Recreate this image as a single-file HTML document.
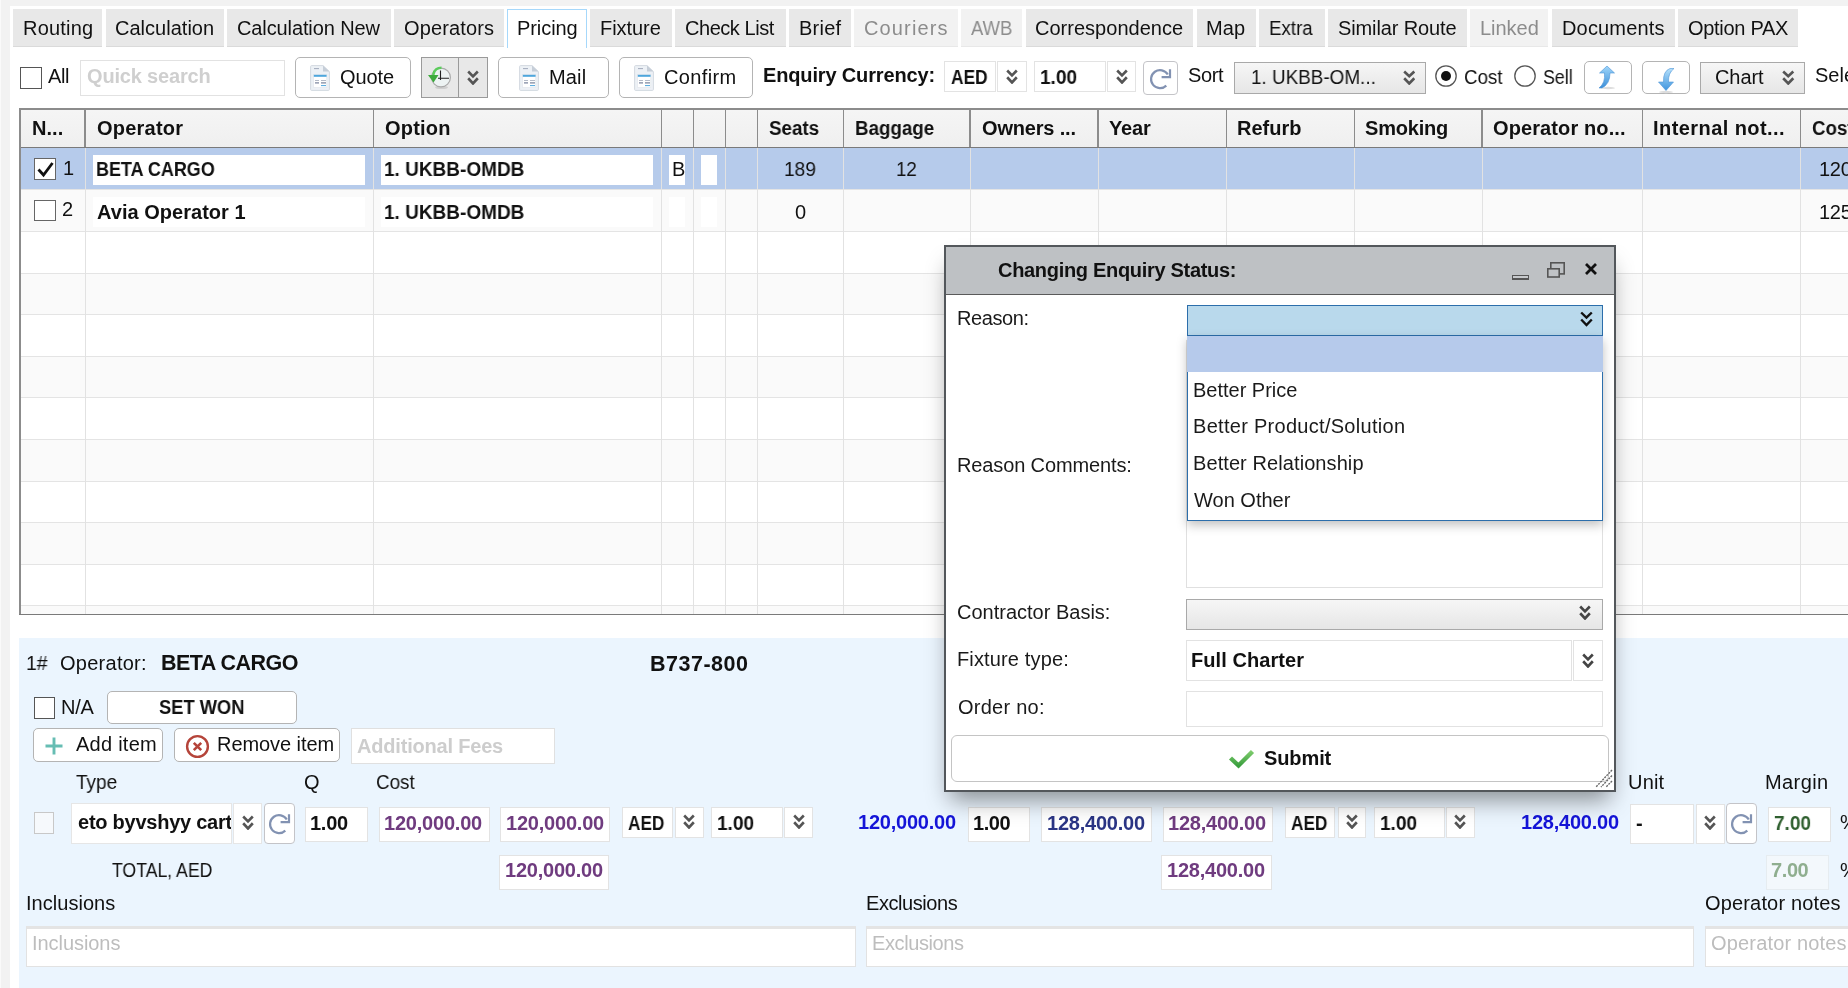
<!DOCTYPE html><html><head><meta charset="utf-8"><style>
*{box-sizing:border-box}
html,body{margin:0;padding:0}
body{width:1848px;height:988px;overflow:hidden;position:relative;background:#fff;font-family:"Liberation Sans",sans-serif;color:#111}
body div, body svg{position:absolute}
.t{white-space:nowrap;will-change:transform}
</style></head><body><div style="left:0.00px;top:0.00px;width:1848.00px;height:988.00px;background:#fff"></div>
<div style="left:1.00px;top:0.00px;width:8.50px;height:988.00px;background:#f2f2f2"></div>
<div style="left:9.50px;top:0.00px;width:1838.50px;height:6.00px;background:#f2f2f2"></div>
<div style="left:0.00px;top:0.00px;width:1.20px;height:988.00px;background:#fafafa"></div>
<div style="left:13.00px;top:9.00px;width:89.00px;height:38.00px;background:#e8e8e8;border-bottom:1px solid #dadada"></div>
<div class="t" style="left:23.00px;top:18.00px;font-size:20px;line-height:20px;letter-spacing:0.198px;">Routing</div>
<div style="left:106.00px;top:9.00px;width:118.00px;height:38.00px;background:#e8e8e8;border-bottom:1px solid #dadada"></div>
<div class="t" style="left:115.00px;top:18.00px;font-size:20px;line-height:20px;letter-spacing:0.018px;">Calculation</div>
<div style="left:227.00px;top:9.00px;width:163.50px;height:38.00px;background:#e8e8e8;border-bottom:1px solid #dadada"></div>
<div class="t" style="left:236.50px;top:18.00px;font-size:20px;line-height:20px;letter-spacing:-0.112px;">Calculation New</div>
<div style="left:394.00px;top:9.00px;width:110.00px;height:38.00px;background:#e8e8e8;border-bottom:1px solid #dadada"></div>
<div class="t" style="left:403.50px;top:18.00px;font-size:20px;line-height:20px;letter-spacing:0.134px;">Operators</div>
<div style="left:507.00px;top:9.00px;width:80.00px;height:39.00px;background:#fff;border:1px solid #a6d8fb;border-bottom:none"></div>
<div class="t" style="left:517.00px;top:18.00px;font-size:20px;line-height:20px;letter-spacing:-0.068px;">Pricing</div>
<div style="left:590.00px;top:9.00px;width:82.00px;height:38.00px;background:#e8e8e8;border-bottom:1px solid #dadada"></div>
<div class="t" style="left:600.00px;top:18.00px;font-size:20px;line-height:20px;letter-spacing:-0.050px;">Fixture</div>
<div style="left:675.00px;top:9.00px;width:111.00px;height:38.00px;background:#e8e8e8;border-bottom:1px solid #dadada"></div>
<div class="t" style="left:685.00px;top:18.00px;font-size:20px;line-height:20px;letter-spacing:-0.457px;">Check List</div>
<div style="left:789.00px;top:9.00px;width:62.00px;height:38.00px;background:#e8e8e8;border-bottom:1px solid #dadada"></div>
<div class="t" style="left:798.50px;top:18.00px;font-size:20px;line-height:20px;letter-spacing:0.233px;">Brief</div>
<div style="left:854.00px;top:9.00px;width:104.00px;height:38.00px;background:#f2f2f2;border-bottom:1px solid #e8e8e8"></div>
<div class="t" style="left:864.00px;top:18.00px;font-size:20px;line-height:20px;color:#8c8c8c;letter-spacing:1.132px;">Couriers</div>
<div style="left:961.00px;top:9.00px;width:61.00px;height:38.00px;background:#f2f2f2;border-bottom:1px solid #e8e8e8"></div>
<div class="t" style="left:971.00px;top:18.00px;font-size:20px;line-height:20px;color:#8c8c8c;transform:scaleX(0.9219);transform-origin:0 0;">AWB</div>
<div style="left:1026.00px;top:9.00px;width:167.00px;height:38.00px;background:#e8e8e8;border-bottom:1px solid #dadada"></div>
<div class="t" style="left:1035.00px;top:18.00px;font-size:20px;line-height:20px;letter-spacing:0.019px;">Correspondence</div>
<div style="left:1197.00px;top:9.00px;width:59.00px;height:38.00px;background:#e8e8e8;border-bottom:1px solid #dadada"></div>
<div class="t" style="left:1206.00px;top:18.00px;font-size:20px;line-height:20px;letter-spacing:0.108px;">Map</div>
<div style="left:1259.00px;top:9.00px;width:66.00px;height:38.00px;background:#e8e8e8;border-bottom:1px solid #dadada"></div>
<div class="t" style="left:1269.06px;top:18.00px;font-size:20px;line-height:20px;transform:scaleX(0.9365);transform-origin:0 0;">Extra</div>
<div style="left:1328.00px;top:9.00px;width:139.00px;height:38.00px;background:#e8e8e8;border-bottom:1px solid #dadada"></div>
<div class="t" style="left:1338.00px;top:18.00px;font-size:20px;line-height:20px;letter-spacing:-0.118px;">Similar Route</div>
<div style="left:1470.00px;top:9.00px;width:78.00px;height:38.00px;background:#f2f2f2;border-bottom:1px solid #e8e8e8"></div>
<div class="t" style="left:1480.00px;top:18.00px;font-size:20px;line-height:20px;color:#8c8c8c;letter-spacing:-0.022px;">Linked</div>
<div style="left:1552.00px;top:9.00px;width:123.00px;height:38.00px;background:#e8e8e8;border-bottom:1px solid #dadada"></div>
<div class="t" style="left:1561.50px;top:18.00px;font-size:20px;line-height:20px;letter-spacing:0.168px;">Documents</div>
<div style="left:1678.00px;top:9.00px;width:120.00px;height:38.00px;background:#e8e8e8;border-bottom:1px solid #dadada"></div>
<div class="t" style="left:1688.00px;top:18.00px;font-size:20px;line-height:20px;letter-spacing:-0.298px;">Option PAX</div>
<div style="left:20.00px;top:67.00px;width:21.50px;height:22.00px;border:1px solid #555;background:#fff"></div>
<div class="t" style="left:48.00px;top:66.00px;font-size:20px;line-height:20px;letter-spacing:-0.392px;">All</div>
<div style="left:80.00px;top:60.00px;width:205.00px;height:36.00px;border:1px solid #e2e2e2;background:#fff"></div>
<div class="t" style="left:87.00px;top:66.00px;font-size:20px;line-height:20px;font-weight:700;color:#cfcfcf;letter-spacing:-0.173px;">Quick search</div>
<div style="left:295.00px;top:57.00px;width:116.00px;height:41.00px;border:1.5px solid #b4b4b4;border-radius:5px;background:#fff"></div>
<svg style="left:310.2px;top:65px" width="20" height="26" viewBox="0 0 20 26"><path d="M0.6 1.6 Q0.6 0.6 1.6 0.6 L13 0.6 L19.4 6.6 L19.4 24.5 Q19.4 25.4 18.4 25.4 L1.6 25.4 Q0.6 25.4 0.6 24.5 Z" fill="#edf1f6" stroke="#d3d9e0" stroke-width="1"/><path d="M13 0.6 L13 6.6 L19.4 6.6 Z" fill="#c6ced8"/><rect x="4" y="3.2" width="5" height="0.9" fill="#98a1b3"/><rect x="3.4" y="9.4" width="13.4" height="13.2" fill="#fff" stroke="#dfe3e9" stroke-width="0.6"/><rect x="3.8" y="9.8" width="12.8" height="2" fill="#4ea6dc"/><rect x="5" y="15.2" width="4" height="0.8" fill="#a3aabb"/><rect x="11" y="15.2" width="5" height="0.8" fill="#a3aabb"/><rect x="5" y="17" width="4" height="1.7" fill="#9fa6b8"/><rect x="11" y="17" width="5" height="1.7" fill="#9fa6b8"/><rect x="11" y="20.1" width="5" height="1" fill="#4ea6dc"/></svg>
<div class="t" style="left:340.00px;top:67.40px;font-size:20px;line-height:20px;letter-spacing:-0.090px;">Quote</div>
<div style="left:498.00px;top:57.00px;width:111.00px;height:41.00px;border:1.5px solid #b4b4b4;border-radius:5px;background:#fff"></div>
<svg style="left:519.2px;top:65px" width="20" height="26" viewBox="0 0 20 26"><path d="M0.6 1.6 Q0.6 0.6 1.6 0.6 L13 0.6 L19.4 6.6 L19.4 24.5 Q19.4 25.4 18.4 25.4 L1.6 25.4 Q0.6 25.4 0.6 24.5 Z" fill="#edf1f6" stroke="#d3d9e0" stroke-width="1"/><path d="M13 0.6 L13 6.6 L19.4 6.6 Z" fill="#c6ced8"/><rect x="4" y="3.2" width="5" height="0.9" fill="#98a1b3"/><rect x="3.4" y="9.4" width="13.4" height="13.2" fill="#fff" stroke="#dfe3e9" stroke-width="0.6"/><rect x="3.8" y="9.8" width="12.8" height="2" fill="#4ea6dc"/><rect x="5" y="15.2" width="4" height="0.8" fill="#a3aabb"/><rect x="11" y="15.2" width="5" height="0.8" fill="#a3aabb"/><rect x="5" y="17" width="4" height="1.7" fill="#9fa6b8"/><rect x="11" y="17" width="5" height="1.7" fill="#9fa6b8"/><rect x="11" y="20.1" width="5" height="1" fill="#4ea6dc"/></svg>
<div class="t" style="left:549.00px;top:67.40px;font-size:20px;line-height:20px;letter-spacing:0.158px;">Mail</div>
<div style="left:619.00px;top:57.00px;width:134.00px;height:41.00px;border:1.5px solid #b4b4b4;border-radius:5px;background:#fff"></div>
<svg style="left:634.2px;top:65px" width="20" height="26" viewBox="0 0 20 26"><path d="M0.6 1.6 Q0.6 0.6 1.6 0.6 L13 0.6 L19.4 6.6 L19.4 24.5 Q19.4 25.4 18.4 25.4 L1.6 25.4 Q0.6 25.4 0.6 24.5 Z" fill="#edf1f6" stroke="#d3d9e0" stroke-width="1"/><path d="M13 0.6 L13 6.6 L19.4 6.6 Z" fill="#c6ced8"/><rect x="4" y="3.2" width="5" height="0.9" fill="#98a1b3"/><rect x="3.4" y="9.4" width="13.4" height="13.2" fill="#fff" stroke="#dfe3e9" stroke-width="0.6"/><rect x="3.8" y="9.8" width="12.8" height="2" fill="#4ea6dc"/><rect x="5" y="15.2" width="4" height="0.8" fill="#a3aabb"/><rect x="11" y="15.2" width="5" height="0.8" fill="#a3aabb"/><rect x="5" y="17" width="4" height="1.7" fill="#9fa6b8"/><rect x="11" y="17" width="5" height="1.7" fill="#9fa6b8"/><rect x="11" y="20.1" width="5" height="1" fill="#4ea6dc"/></svg>
<div class="t" style="left:663.80px;top:67.40px;font-size:20px;line-height:20px;letter-spacing:0.375px;">Confirm</div>
<div style="left:421.00px;top:57.00px;width:67.00px;height:41.00px;border:1.5px solid #9a9a9a;background:#e8e8e8"></div>
<div style="left:457.70px;top:57.00px;width:1.50px;height:41.00px;background:#9a9a9a"></div>
<svg style="left:424px;top:63px" width="30" height="28" viewBox="0 0 30 28"><ellipse cx="17.5" cy="24.5" rx="6.5" ry="1.6" fill="#cfcfcf"/><circle cx="17" cy="14.5" r="9.4" fill="#edf3f3" stroke="#a9a9a9" stroke-width="1.2"/><path d="M16.5 7.5 L16.5 17 M14 15.2 L25 15.2" stroke="#222" stroke-width="1.1"/><path d="M17.5 4.8 Q11 4.8 9.5 11 L9.5 14" fill="none" stroke="#5ccc5c" stroke-width="2.4"/><path d="M4 12 L9.5 19.5 L14.5 12 Z" fill="#3daa3d"/></svg>
<svg style="left:467px;top:70px" width="12" height="15" viewBox="0 0 12 15"><path d="M1.2 1.5 L6.0 6.3 L10.8 1.5 M1.2 8.25 L6.0 13.5 L10.8 8.25" fill="none" stroke="#555" stroke-width="2.6"/></svg>
<div class="t" style="left:763.00px;top:64.50px;font-size:20px;line-height:20px;font-weight:700;letter-spacing:-0.151px;">Enquiry Currency:</div>
<div style="left:944.00px;top:61.00px;width:52.00px;height:31.00px;border:1px solid #e3e3e3;background:#fff"></div>
<div style="left:997.00px;top:61.00px;width:30.00px;height:31.00px;border:1px solid #e3e3e3;background:#fff"></div>
<div class="t" style="left:951.30px;top:67.40px;font-size:20px;line-height:20px;font-weight:700;transform:scaleX(0.8664);transform-origin:0 0;">AED</div>
<svg style="left:1006px;top:69px" width="12" height="15" viewBox="0 0 12 15"><path d="M1.2 1.5 L6.0 6.3 L10.8 1.5 M1.2 8.25 L6.0 13.5 L10.8 8.25" fill="none" stroke="#555" stroke-width="2.6"/></svg>
<div style="left:1034.00px;top:61.00px;width:72.00px;height:31.00px;border:1px solid #e3e3e3;background:#fff"></div>
<div style="left:1107.00px;top:61.00px;width:29.00px;height:31.00px;border:1px solid #e3e3e3;background:#fff"></div>
<div class="t" style="left:1040.05px;top:67.40px;font-size:20px;line-height:20px;font-weight:700;transform:scaleX(0.9523);transform-origin:0 0;">1.00</div>
<svg style="left:1115.5px;top:69px" width="12.0" height="15" viewBox="0 0 12.0 15"><path d="M1.2 1.5 L6.0 6.3 L10.8 1.5 M1.2 8.25 L6.0 13.5 L10.8 8.25" fill="none" stroke="#555" stroke-width="2.6"/></svg>
<div style="left:1143.00px;top:61.00px;width:34.50px;height:34.00px;border:1.5px solid #c4c4c8;border-radius:4px;background:#fff;box-sizing:border-box"></div>
<svg style="left:1148.2px;top:66.0px" width="26" height="26" viewBox="0 0 26 26"><path d="M19.8 8.5 A9 9 0 1 0 18.3 19.6" fill="none" stroke="#8292b2" stroke-width="2.2"/><path d="M22 3.2 L22 11.2 L13.6 11.2" fill="none" stroke="#8292b2" stroke-width="2.2"/></svg>
<div class="t" style="left:1188.00px;top:65.00px;font-size:20px;line-height:20px;letter-spacing:-0.374px;">Sort</div>
<div style="left:1234.00px;top:62.00px;width:192.00px;height:32.00px;border:1px solid #a9a9a9;background:linear-gradient(#f6f6f6,#e6e6e6)"></div>
<div class="t" style="left:1250.66px;top:67.40px;font-size:20px;line-height:20px;transform:scaleX(0.9438);transform-origin:0 0;">1. UKBB-OM...</div>
<svg style="left:1402.5px;top:70px" width="12.5" height="15" viewBox="0 0 12.5 15"><path d="M1.2 1.5 L6.25 6.3 L11.3 1.5 M1.2 8.25 L6.25 13.5 L11.3 8.25" fill="none" stroke="#555" stroke-width="2.6"/></svg>
<svg style="left:1434px;top:64px" width="24" height="24" viewBox="0 0 24 24"><circle cx="12" cy="12" r="10.2" fill="#fff" stroke="#555" stroke-width="1.3"/><circle cx="12" cy="12" r="5" fill="#111"/></svg>
<div class="t" style="left:1464.06px;top:66.80px;font-size:20px;line-height:20px;transform:scaleX(0.9367);transform-origin:0 0;">Cost</div>
<svg style="left:1513px;top:64px" width="24" height="24" viewBox="0 0 24 24"><circle cx="12" cy="12" r="10.2" fill="#fff" stroke="#555" stroke-width="1.3"/></svg>
<div class="t" style="left:1543.00px;top:66.80px;font-size:20px;line-height:20px;transform:scaleX(0.8904);transform-origin:0 0;">Sell</div>
<div style="left:1584.00px;top:61.00px;width:48.00px;height:33.00px;border:1.5px solid #b4b4b4;border-radius:5px;background:#fff"></div>
<svg style="left:1596px;top:64px" width="22" height="28" viewBox="0 0 22 28"><defs><linearGradient id="ga" x1="0" y1="0" x2="0" y2="1"><stop offset="0" stop-color="#9fd6fa"/><stop offset="1" stop-color="#3d8fd8"/></linearGradient></defs><ellipse cx="12" cy="24" rx="7" ry="1.2" fill="#ddd"/><path d="M11 2 L18.5 9 L14 9 Q14 20 6 24 L3 24 Q9.5 19 8.5 9 L3.5 9 Z" fill="url(#ga)" stroke="#4b93d6" stroke-width="0.6"/></svg>
<div style="left:1642.00px;top:61.00px;width:48.00px;height:33.00px;border:1.5px solid #b4b4b4;border-radius:5px;background:#fff"></div>
<svg style="left:1655px;top:66.5px" width="22" height="28" viewBox="0 0 22 28"><defs><linearGradient id="gb" x1="0" y1="0" x2="0" y2="1"><stop offset="0" stop-color="#b5e0fb"/><stop offset="1" stop-color="#3f95de"/></linearGradient></defs><ellipse cx="11" cy="25" rx="7" ry="1.2" fill="#ddd"/><path d="M19 1.5 L15 1.5 Q8 4 8.5 15 L3.5 15 L11 23.5 L18.5 15 L13.5 15 Q13 6 19 1.5 Z" fill="url(#gb)" stroke="#4b93d6" stroke-width="0.6"/></svg>
<div style="left:1700.00px;top:62.00px;width:105.00px;height:32.00px;border:1px solid #a9a9a9;background:linear-gradient(#f6f6f6,#e6e6e6)"></div>
<div class="t" style="left:1715.00px;top:67.40px;font-size:20px;line-height:20px;letter-spacing:-0.087px;">Chart</div>
<svg style="left:1782px;top:70px" width="12.5" height="15" viewBox="0 0 12.5 15"><path d="M1.2 1.5 L6.25 6.3 L11.3 1.5 M1.2 8.25 L6.25 13.5 L11.3 8.25" fill="none" stroke="#555" stroke-width="2.6"/></svg>
<div class="t" style="left:1815.00px;top:65.00px;font-size:20px;line-height:20px;">Select</div>
<div style="left:19.50px;top:148.00px;width:1828.50px;height:42.00px;background:#b6cbeb;border-bottom:1px solid #e4e4e4"></div>
<div style="left:19.50px;top:190.00px;width:1828.50px;height:42.00px;background:#fafafa;border-bottom:1px solid #e4e4e4"></div>
<div style="left:19.50px;top:232.00px;width:1828.50px;height:41.60px;background:#ffffff;border-bottom:1px solid #e4e4e4"></div>
<div style="left:19.50px;top:273.60px;width:1828.50px;height:41.60px;background:#fafafa;border-bottom:1px solid #e4e4e4"></div>
<div style="left:19.50px;top:315.20px;width:1828.50px;height:41.60px;background:#ffffff;border-bottom:1px solid #e4e4e4"></div>
<div style="left:19.50px;top:356.80px;width:1828.50px;height:41.60px;background:#fafafa;border-bottom:1px solid #e4e4e4"></div>
<div style="left:19.50px;top:398.40px;width:1828.50px;height:41.60px;background:#ffffff;border-bottom:1px solid #e4e4e4"></div>
<div style="left:19.50px;top:440.00px;width:1828.50px;height:41.60px;background:#fafafa;border-bottom:1px solid #e4e4e4"></div>
<div style="left:19.50px;top:481.60px;width:1828.50px;height:41.60px;background:#ffffff;border-bottom:1px solid #e4e4e4"></div>
<div style="left:19.50px;top:523.20px;width:1828.50px;height:41.60px;background:#fafafa;border-bottom:1px solid #e4e4e4"></div>
<div style="left:19.50px;top:564.80px;width:1828.50px;height:41.60px;background:#ffffff;border-bottom:1px solid #e4e4e4"></div>
<div style="left:19.50px;top:606.40px;width:1828.50px;height:7.60px;background:#fafafa"></div>
<div style="left:84.50px;top:148.00px;width:1.00px;height:466.00px;background:#e2e2e2"></div>
<div style="left:373.00px;top:148.00px;width:1.00px;height:466.00px;background:#e2e2e2"></div>
<div style="left:661.00px;top:148.00px;width:1.00px;height:466.00px;background:#e2e2e2"></div>
<div style="left:693.00px;top:148.00px;width:1.00px;height:466.00px;background:#e2e2e2"></div>
<div style="left:725.00px;top:148.00px;width:1.00px;height:466.00px;background:#e2e2e2"></div>
<div style="left:757.00px;top:148.00px;width:1.00px;height:466.00px;background:#e2e2e2"></div>
<div style="left:843.00px;top:148.00px;width:1.00px;height:466.00px;background:#e2e2e2"></div>
<div style="left:969.50px;top:148.00px;width:1.00px;height:466.00px;background:#e2e2e2"></div>
<div style="left:1097.50px;top:148.00px;width:1.00px;height:466.00px;background:#e2e2e2"></div>
<div style="left:1226.00px;top:148.00px;width:1.00px;height:466.00px;background:#e2e2e2"></div>
<div style="left:1354.00px;top:148.00px;width:1.00px;height:466.00px;background:#e2e2e2"></div>
<div style="left:1481.50px;top:148.00px;width:1.00px;height:466.00px;background:#e2e2e2"></div>
<div style="left:1642.00px;top:148.00px;width:1.00px;height:466.00px;background:#e2e2e2"></div>
<div style="left:1800.00px;top:148.00px;width:1.00px;height:466.00px;background:#e2e2e2"></div>
<div style="left:19.50px;top:108.00px;width:1828.50px;height:40.00px;background:linear-gradient(#f5f5f5,#efefef);border-top:2px solid #8c8c8c"></div>
<div style="left:19.50px;top:146.60px;width:1828.50px;height:1.80px;background:#7a7a7a"></div>
<div style="left:84.20px;top:110.00px;width:1.60px;height:37.00px;background:#8c8c8c"></div>
<div style="left:372.70px;top:110.00px;width:1.60px;height:37.00px;background:#8c8c8c"></div>
<div style="left:660.70px;top:110.00px;width:1.60px;height:37.00px;background:#8c8c8c"></div>
<div style="left:692.70px;top:110.00px;width:1.60px;height:37.00px;background:#8c8c8c"></div>
<div style="left:724.70px;top:110.00px;width:1.60px;height:37.00px;background:#8c8c8c"></div>
<div style="left:756.70px;top:110.00px;width:1.60px;height:37.00px;background:#8c8c8c"></div>
<div style="left:842.70px;top:110.00px;width:1.60px;height:37.00px;background:#8c8c8c"></div>
<div style="left:969.20px;top:110.00px;width:1.60px;height:37.00px;background:#8c8c8c"></div>
<div style="left:1097.20px;top:110.00px;width:1.60px;height:37.00px;background:#8c8c8c"></div>
<div style="left:1225.70px;top:110.00px;width:1.60px;height:37.00px;background:#8c8c8c"></div>
<div style="left:1353.70px;top:110.00px;width:1.60px;height:37.00px;background:#8c8c8c"></div>
<div style="left:1481.20px;top:110.00px;width:1.60px;height:37.00px;background:#8c8c8c"></div>
<div style="left:1641.70px;top:110.00px;width:1.60px;height:37.00px;background:#8c8c8c"></div>
<div style="left:1799.70px;top:110.00px;width:1.60px;height:37.00px;background:#8c8c8c"></div>
<div style="left:18.50px;top:108.00px;width:2.00px;height:507.00px;background:#8c8c8c"></div>
<div style="left:18.50px;top:613.50px;width:1829.50px;height:1.50px;background:#7a7a7a"></div>
<div class="t" style="left:32.30px;top:118.00px;font-size:20px;line-height:20px;font-weight:700;letter-spacing:0.048px;">N...</div>
<div class="t" style="left:96.90px;top:118.00px;font-size:20px;line-height:20px;font-weight:700;letter-spacing:0.217px;">Operator</div>
<div class="t" style="left:385.00px;top:118.00px;font-size:20px;line-height:20px;font-weight:700;letter-spacing:0.219px;">Option</div>
<div class="t" style="left:769.00px;top:118.00px;font-size:20px;line-height:20px;font-weight:700;transform:scaleX(0.9390);transform-origin:0 0;">Seats</div>
<div class="t" style="left:855.06px;top:118.00px;font-size:20px;line-height:20px;font-weight:700;transform:scaleX(0.9383);transform-origin:0 0;">Baggage</div>
<div class="t" style="left:982.00px;top:118.00px;font-size:20px;line-height:20px;font-weight:700;letter-spacing:-0.181px;">Owners ...</div>
<div class="t" style="left:1109.00px;top:118.00px;font-size:20px;line-height:20px;font-weight:700;letter-spacing:-0.161px;">Year</div>
<div class="t" style="left:1236.70px;top:118.00px;font-size:20px;line-height:20px;font-weight:700;letter-spacing:0.015px;">Refurb</div>
<div class="t" style="left:1365.00px;top:118.00px;font-size:20px;line-height:20px;font-weight:700;letter-spacing:-0.206px;">Smoking</div>
<div class="t" style="left:1493.30px;top:118.00px;font-size:20px;line-height:20px;font-weight:700;letter-spacing:0.110px;">Operator no...</div>
<div class="t" style="left:1652.50px;top:118.00px;font-size:20px;line-height:20px;font-weight:700;letter-spacing:0.429px;">Internal not...</div>
<div class="t" style="left:1812.00px;top:118.00px;font-size:20px;line-height:20px;font-weight:700;transform:scaleX(0.9334);transform-origin:0 0;">Cost</div>
<div style="left:34.00px;top:158.00px;width:22.00px;height:21.50px;border:1px solid #666;background:#fff"></div>
<svg style="left:36px;top:161px" width="19" height="17" viewBox="0 0 19 17"><path d="M2.5 8.5 L7.5 14 L16.5 2" fill="none" stroke="#111" stroke-width="2.8"/></svg>
<div class="t" style="left:62.50px;top:158.00px;font-size:20px;line-height:20px;">1</div>
<div style="left:93.00px;top:155.00px;width:272.00px;height:30.00px;background:#fff"></div>
<div class="t" style="left:96.10px;top:159.30px;font-size:20px;line-height:20px;font-weight:700;transform:scaleX(0.8980);transform-origin:0 0;">BETA CARGO</div>
<div style="left:381.00px;top:155.00px;width:272.00px;height:30.00px;background:#fff"></div>
<div class="t" style="left:384.05px;top:159.30px;font-size:20px;line-height:20px;font-weight:700;transform:scaleX(0.9499);transform-origin:0 0;">1. UKBB-OMDB</div>
<div style="left:669.00px;top:155.00px;width:16.00px;height:30.00px;background:#fff"></div>
<div class="t" style="left:672.00px;top:159.30px;font-size:20px;line-height:20px;">B</div>
<div style="left:701.00px;top:155.00px;width:16.00px;height:30.00px;background:#fff"></div>
<div class="t" style="left:783.84px;top:159.30px;font-size:20px;line-height:20px;transform:scaleX(0.9583);transform-origin:0 0;">189</div>
<div class="t" style="left:895.86px;top:159.30px;font-size:20px;line-height:20px;transform:scaleX(0.9374);transform-origin:0 0;">12</div>
<div class="t" style="left:1819.40px;top:159.30px;font-size:20px;line-height:20px;letter-spacing:-0.264px;">120,000.00</div>
<div style="left:34.00px;top:200.00px;width:22.00px;height:21.00px;border:1px solid #666;background:#fff"></div>
<div class="t" style="left:61.50px;top:198.60px;font-size:20px;line-height:20px;">2</div>
<div style="left:93.00px;top:197.00px;width:272.00px;height:30.00px;background:#fff"></div>
<div style="left:381.00px;top:197.00px;width:272.00px;height:30.00px;background:#fff"></div>
<div style="left:669.00px;top:197.00px;width:16.00px;height:30.00px;background:#fff"></div>
<div style="left:701.00px;top:197.00px;width:16.00px;height:30.00px;background:#fff"></div>
<div class="t" style="left:96.50px;top:201.50px;font-size:20px;line-height:20px;font-weight:700;letter-spacing:0.030px;">Avia Operator 1</div>
<div class="t" style="left:384.05px;top:201.50px;font-size:20px;line-height:20px;font-weight:700;transform:scaleX(0.9499);transform-origin:0 0;">1. UKBB-OMDB</div>
<div class="t" style="left:795.00px;top:201.50px;font-size:20px;line-height:20px;">0</div>
<div class="t" style="left:1819.40px;top:201.50px;font-size:20px;line-height:20px;letter-spacing:-0.264px;">125,000.00</div>
<div style="left:19.00px;top:638.00px;width:1829.00px;height:350.00px;background:#ebf5fe"></div>
<div class="t" style="left:26.03px;top:653.20px;font-size:20px;line-height:20px;transform:scaleX(0.9718);transform-origin:0 0;">1#</div>
<div class="t" style="left:60.00px;top:653.20px;font-size:20px;line-height:20px;letter-spacing:0.259px;">Operator:</div>
<div class="t" style="left:160.50px;top:652.73px;font-size:21.5px;line-height:21.5px;font-weight:700;letter-spacing:-0.523px;">BETA CARGO</div>
<div class="t" style="left:650.00px;top:654.43px;font-size:21.5px;line-height:21.5px;font-weight:700;letter-spacing:0.504px;">B737-800</div>
<div style="left:33.50px;top:697.00px;width:21.00px;height:22.00px;border:1px solid #555;background:#fff"></div>
<div class="t" style="left:61.00px;top:697.00px;font-size:20px;line-height:20px;letter-spacing:-0.250px;">N/A</div>
<div style="left:106.50px;top:691.00px;width:190.50px;height:32.50px;border:1.5px solid #b4b4b4;border-radius:5px;background:#fff"></div>
<div class="t" style="left:159.00px;top:697.00px;font-size:20px;line-height:20px;font-weight:700;transform:scaleX(0.9151);transform-origin:0 0;">SET WON</div>
<div style="left:33.00px;top:728.00px;width:130.00px;height:34.00px;border:1.5px solid #b4b4b4;border-radius:5px;background:#fff"></div>
<svg style="left:44px;top:736px" width="20" height="20" viewBox="0 0 20 20"><path d="M10 1.5 L10 18.5 M1.5 10 L18.5 10" stroke="#66bdb3" stroke-width="2.9"/></svg>
<div class="t" style="left:76.00px;top:734.00px;font-size:20px;line-height:20px;letter-spacing:0.248px;">Add item</div>
<div style="left:173.70px;top:728.00px;width:166.30px;height:34.00px;border:1.5px solid #b4b4b4;border-radius:5px;background:#fff"></div>
<svg style="left:185px;top:734px" width="25" height="25" viewBox="0 0 25 25"><circle cx="12.5" cy="12.5" r="10.4" fill="none" stroke="#b5443a" stroke-width="2.4"/><path d="M8.8 8.8 L16.2 16.2 M16.2 8.8 L8.8 16.2" stroke="#b5443a" stroke-width="2.6"/></svg>
<div class="t" style="left:216.50px;top:734.00px;font-size:20px;line-height:20px;letter-spacing:-0.065px;">Remove item</div>
<div style="left:351.00px;top:728.00px;width:204.00px;height:35.50px;border:1px solid #e0e0e0;background:#fff"></div>
<div class="t" style="left:357.40px;top:735.50px;font-size:20px;line-height:20px;font-weight:700;color:#cdcdcd;letter-spacing:-0.192px;">Additional Fees</div>
<div class="t" style="left:76.10px;top:771.80px;font-size:20px;line-height:20px;transform:scaleX(0.9506);transform-origin:0 0;">Type</div>
<div class="t" style="left:303.50px;top:771.80px;font-size:20px;line-height:20px;">Q</div>
<div class="t" style="left:376.06px;top:771.80px;font-size:20px;line-height:20px;transform:scaleX(0.9417);transform-origin:0 0;">Cost</div>
<div class="t" style="left:1627.50px;top:771.80px;font-size:20px;line-height:20px;letter-spacing:0.197px;">Unit</div>
<div class="t" style="left:1765.00px;top:771.80px;font-size:20px;line-height:20px;letter-spacing:0.398px;">Margin</div>
<div style="left:33.50px;top:812.00px;width:20.50px;height:22.00px;border:1px solid #c8c8c8;background:#f6f9fc"></div>
<div style="left:71.00px;top:803.00px;width:160.50px;height:40.50px;border:1px solid #e6e6e6;background:#fff"></div>
<div style="left:72px;top:804px;width:159px;height:39px;overflow:hidden"><div class="t" style="left:5.50px;top:8.20px;font-size:20px;line-height:20px;font-weight:700;letter-spacing:-0.246px;">eto byvshyy cartoe</div></div>
<div style="left:233.00px;top:803.00px;width:28.50px;height:40.50px;border:1px solid #e6e6e6;background:#fff"></div>
<svg style="left:241.5px;top:815px" width="12.0" height="15" viewBox="0 0 12.0 15"><path d="M1.2 1.5 L6.0 6.3 L10.8 1.5 M1.2 8.25 L6.0 13.5 L10.8 8.25" fill="none" stroke="#555" stroke-width="2.6"/></svg>
<div style="left:263.50px;top:803.00px;width:31.00px;height:40.50px;border:1.5px solid #c4c4c8;border-radius:4px;background:#fff;box-sizing:border-box"></div>
<svg style="left:267.0px;top:811.2px" width="26" height="26" viewBox="0 0 26 26"><path d="M19.8 8.5 A9 9 0 1 0 18.3 19.6" fill="none" stroke="#8292b2" stroke-width="2.2"/><path d="M22 3.2 L22 11.2 L13.6 11.2" fill="none" stroke="#8292b2" stroke-width="2.2"/></svg>
<div style="left:304.50px;top:806.50px;width:63.00px;height:35.50px;border:1px solid #e3e3e3;background:#fff"></div>
<div class="t" style="left:310.40px;top:812.50px;font-size:20px;line-height:20px;font-weight:700;letter-spacing:-0.268px;">1.00</div>
<div style="left:378.50px;top:806.50px;width:111.00px;height:35.50px;border:1px solid #e3e3e3;background:#fff"></div>
<div class="t" style="left:384.30px;top:812.50px;font-size:20px;line-height:20px;font-weight:700;color:#6f3b7f;letter-spacing:-0.208px;">120,000.00</div>
<div style="left:500.00px;top:806.50px;width:110.00px;height:35.50px;border:1px solid #e3e3e3;background:#fff"></div>
<div class="t" style="left:506.30px;top:812.50px;font-size:20px;line-height:20px;font-weight:700;color:#6f3b7f;letter-spacing:-0.208px;">120,000.00</div>
<div style="left:621.50px;top:806.50px;width:51.00px;height:31.00px;border:1px solid #e3e3e3;background:#fff"></div>
<div class="t" style="left:628.00px;top:812.50px;font-size:20px;line-height:20px;font-weight:700;transform:scaleX(0.8616);transform-origin:0 0;">AED</div>
<div style="left:674.50px;top:806.50px;width:29.00px;height:31.00px;border:1px solid #e3e3e3;background:#fff"></div>
<svg style="left:683px;top:814px" width="12" height="15" viewBox="0 0 12 15"><path d="M1.2 1.5 L6.0 6.3 L10.8 1.5 M1.2 8.25 L6.0 13.5 L10.8 8.25" fill="none" stroke="#555" stroke-width="2.6"/></svg>
<div style="left:711.00px;top:806.50px;width:72.00px;height:31.00px;border:1px solid #e3e3e3;background:#fff"></div>
<div class="t" style="left:717.05px;top:812.50px;font-size:20px;line-height:20px;font-weight:700;transform:scaleX(0.9523);transform-origin:0 0;">1.00</div>
<div style="left:784.00px;top:806.50px;width:28.50px;height:31.00px;border:1px solid #e3e3e3;background:#fff"></div>
<svg style="left:792.5px;top:814px" width="12.0" height="15" viewBox="0 0 12.0 15"><path d="M1.2 1.5 L6.0 6.3 L10.8 1.5 M1.2 8.25 L6.0 13.5 L10.8 8.25" fill="none" stroke="#555" stroke-width="2.6"/></svg>
<div class="t" style="left:858.00px;top:811.50px;font-size:20px;line-height:20px;font-weight:700;color:#1414d8;letter-spacing:-0.219px;">120,000.00</div>
<div style="left:967.50px;top:807.00px;width:62.50px;height:34.50px;border:1px solid #e3e3e3;background:#fff"></div>
<div class="t" style="left:973.00px;top:812.50px;font-size:20px;line-height:20px;font-weight:700;letter-spacing:-0.434px;">1.00</div>
<div style="left:1041.00px;top:807.00px;width:110.50px;height:34.50px;border:1px solid #e3e3e3;background:#fff"></div>
<div class="t" style="left:1047.00px;top:812.50px;font-size:20px;line-height:20px;font-weight:700;color:#2b3585;letter-spacing:-0.219px;">128,400.00</div>
<div style="left:1162.50px;top:807.00px;width:110.50px;height:34.50px;border:1px solid #e3e3e3;background:#fff"></div>
<div class="t" style="left:1168.00px;top:812.50px;font-size:20px;line-height:20px;font-weight:700;color:#6f3b7f;letter-spacing:-0.219px;">128,400.00</div>
<div style="left:1284.50px;top:806.50px;width:50.50px;height:31.00px;border:1px solid #e3e3e3;background:#fff"></div>
<div class="t" style="left:1291.00px;top:812.50px;font-size:20px;line-height:20px;font-weight:700;transform:scaleX(0.8616);transform-origin:0 0;">AED</div>
<div style="left:1337.50px;top:806.50px;width:28.00px;height:31.00px;border:1px solid #e3e3e3;background:#fff"></div>
<svg style="left:1345.5px;top:814px" width="12.0" height="15" viewBox="0 0 12.0 15"><path d="M1.2 1.5 L6.0 6.3 L10.8 1.5 M1.2 8.25 L6.0 13.5 L10.8 8.25" fill="none" stroke="#555" stroke-width="2.6"/></svg>
<div style="left:1373.50px;top:806.50px;width:71.50px;height:31.00px;border:1px solid #e3e3e3;background:#fff"></div>
<div class="t" style="left:1379.55px;top:812.50px;font-size:20px;line-height:20px;font-weight:700;transform:scaleX(0.9523);transform-origin:0 0;">1.00</div>
<div style="left:1446.00px;top:806.50px;width:28.50px;height:31.00px;border:1px solid #e3e3e3;background:#fff"></div>
<svg style="left:1454px;top:814px" width="12" height="15" viewBox="0 0 12 15"><path d="M1.2 1.5 L6.0 6.3 L10.8 1.5 M1.2 8.25 L6.0 13.5 L10.8 8.25" fill="none" stroke="#555" stroke-width="2.6"/></svg>
<div class="t" style="left:1521.00px;top:811.50px;font-size:20px;line-height:20px;font-weight:700;color:#1414d8;letter-spacing:-0.219px;">128,400.00</div>
<div style="left:1629.50px;top:803.50px;width:64.00px;height:40.00px;border:1px solid #e3e3e3;background:#fff"></div>
<div class="t" style="left:1636.40px;top:812.50px;font-size:20px;line-height:20px;font-weight:700;">-</div>
<div style="left:1695.50px;top:803.50px;width:29.00px;height:40.00px;border:1px solid #e3e3e3;background:#fff"></div>
<svg style="left:1704px;top:815px" width="12" height="15" viewBox="0 0 12 15"><path d="M1.2 1.5 L6.0 6.3 L10.8 1.5 M1.2 8.25 L6.0 13.5 L10.8 8.25" fill="none" stroke="#555" stroke-width="2.6"/></svg>
<div style="left:1725.50px;top:803.00px;width:31.50px;height:40.50px;border:1.5px solid #c4c4c8;border-radius:4px;background:#fff;box-sizing:border-box"></div>
<svg style="left:1729.2px;top:811.2px" width="26" height="26" viewBox="0 0 26 26"><path d="M19.8 8.5 A9 9 0 1 0 18.3 19.6" fill="none" stroke="#8292b2" stroke-width="2.2"/><path d="M22 3.2 L22 11.2 L13.6 11.2" fill="none" stroke="#8292b2" stroke-width="2.2"/></svg>
<div style="left:1767.50px;top:806.50px;width:63.00px;height:35.50px;border:1px solid #e3e3e3;background:#fff"></div>
<div class="t" style="left:1773.50px;top:812.50px;font-size:20px;line-height:20px;font-weight:700;color:#2f5f2f;transform:scaleX(0.9510);transform-origin:0 0;">7.00</div>
<div class="t" style="left:1840.00px;top:812.00px;font-size:20px;line-height:20px;">%</div>
<div class="t" style="left:112.00px;top:859.50px;font-size:20px;line-height:20px;transform:scaleX(0.8829);transform-origin:0 0;">TOTAL, AED</div>
<div style="left:498.50px;top:854.50px;width:110.50px;height:35.00px;border:1px solid #e3e3e3;background:#fff"></div>
<div class="t" style="left:504.50px;top:860.00px;font-size:20px;line-height:20px;font-weight:700;color:#6f3b7f;letter-spacing:-0.219px;">120,000.00</div>
<div style="left:1161.00px;top:854.50px;width:110.50px;height:35.00px;border:1px solid #e3e3e3;background:#fff"></div>
<div class="t" style="left:1166.50px;top:860.00px;font-size:20px;line-height:20px;font-weight:700;color:#6f3b7f;letter-spacing:-0.219px;">128,400.00</div>
<div style="left:1766.00px;top:854.50px;width:62.50px;height:35.00px;border:1px solid #e6ecf0;background:#f3f8fc"></div>
<div class="t" style="left:1771.20px;top:860.00px;font-size:20px;line-height:20px;font-weight:700;color:#8fae8f;letter-spacing:-0.401px;">7.00</div>
<div class="t" style="left:1840.00px;top:860.00px;font-size:20px;line-height:20px;">%</div>
<div class="t" style="left:25.50px;top:893.00px;font-size:20px;line-height:20px;letter-spacing:0.029px;">Inclusions</div>
<div class="t" style="left:866.00px;top:893.00px;font-size:20px;line-height:20px;letter-spacing:-0.433px;">Exclusions</div>
<div class="t" style="left:1705.00px;top:893.00px;font-size:20px;line-height:20px;letter-spacing:0.161px;">Operator notes</div>
<div style="left:26.00px;top:926.00px;width:829.60px;height:41.00px;border:1px solid #e2e2e2;border-top:3px solid #e4e4e4;background:#fff"></div>
<div class="t" style="left:32.00px;top:933.00px;font-size:20px;line-height:20px;color:#bdbdbd;letter-spacing:-0.060px;">Inclusions</div>
<div style="left:866.00px;top:926.00px;width:828.00px;height:41.00px;border:1px solid #e2e2e2;border-top:3px solid #e4e4e4;background:#fff"></div>
<div class="t" style="left:872.00px;top:933.00px;font-size:20px;line-height:20px;color:#bdbdbd;letter-spacing:-0.400px;">Exclusions</div>
<div style="left:1705.00px;top:926.00px;width:195.00px;height:41.00px;border:1px solid #e2e2e2;border-top:3px solid #e4e4e4;background:#fff"></div>
<div class="t" style="left:1711.40px;top:933.00px;font-size:20px;line-height:20px;color:#bdbdbd;letter-spacing:0.169px;">Operator notes</div>
<div style="left:944.00px;top:245.00px;width:671.50px;height:546.50px;box-shadow:0 14px 22px -6px rgba(0,0,0,0.42);background:#fff;border:2px solid #53575b"></div>
<div style="left:946.00px;top:246.50px;width:668.00px;height:48.50px;background:#bec1c4;border-bottom:1px solid #5a5a5a"></div>
<div class="t" style="left:998.00px;top:260.00px;font-size:20px;line-height:20px;font-weight:700;letter-spacing:-0.309px;">Changing Enquiry Status:</div>
<div style="left:1512.00px;top:275.00px;width:17.00px;height:5.00px;border:1px solid #555;border-bottom:2px solid #555;background:#c6c9cc"></div>
<svg style="left:1546px;top:261px" width="20" height="18" viewBox="0 0 20 18"><rect x="4.8" y="1.8" width="13.4" height="11.1" fill="none" stroke="#555" stroke-width="1.6"/><rect x="1.8" y="7.8" width="11.4" height="8.2" fill="#c0c3c6" stroke="#555" stroke-width="1.6"/></svg>
<svg style="left:1584px;top:262px" width="14" height="14" viewBox="0 0 14 14"><path d="M2 2 L12 12 M12 2 L2 12" stroke="#111" stroke-width="2.8"/></svg>
<div class="t" style="left:956.50px;top:308.00px;font-size:20px;line-height:20px;color:#1a1a1a;letter-spacing:-0.423px;">Reason:</div>
<div class="t" style="left:956.50px;top:455.00px;font-size:20px;line-height:20px;color:#1a1a1a;letter-spacing:-0.125px;">Reason Comments:</div>
<div class="t" style="left:956.50px;top:602.20px;font-size:20px;line-height:20px;color:#1a1a1a;">Contractor Basis:</div>
<div class="t" style="left:956.50px;top:649.20px;font-size:20px;line-height:20px;color:#1a1a1a;letter-spacing:0.143px;">Fixture type:</div>
<div class="t" style="left:957.50px;top:697.00px;font-size:20px;line-height:20px;color:#1a1a1a;letter-spacing:0.247px;">Order no:</div>
<div style="left:1186.50px;top:304.50px;width:416.50px;height:31.00px;background:#b9d9ec;border:1px solid #2c6eab"></div>
<svg style="left:1579.5px;top:311px" width="13.0" height="15.5" viewBox="0 0 13.0 15.5"><path d="M1.2 1.5 L6.5 6.51 L11.8 1.5 M1.2 8.525 L6.5 14.0 L11.8 8.525" fill="none" stroke="#111" stroke-width="2.4"/></svg>
<div style="left:1186.00px;top:340.00px;width:417.00px;height:248.00px;border:1px solid #e0e0e0;background:#fff"></div>
<div style="left:1186.00px;top:598.50px;width:417.00px;height:31.50px;border:1px solid #a9a9a9;background:linear-gradient(#f6f6f6,#e6e6e6)"></div>
<svg style="left:1579px;top:604.5px" width="12" height="15.0" viewBox="0 0 12 15.0"><path d="M1.2 1.5 L6.0 6.3 L10.8 1.5 M1.2 8.25 L6.0 13.5 L10.8 8.25" fill="none" stroke="#444" stroke-width="2.6"/></svg>
<div style="left:1186.00px;top:640.00px;width:385.50px;height:41.00px;border:1px solid #e2e2e2;background:#fff"></div>
<div style="left:1573.00px;top:640.00px;width:30.00px;height:41.00px;border:1px solid #e2e2e2;background:#fff"></div>
<div class="t" style="left:1191.20px;top:650.10px;font-size:20px;line-height:20px;font-weight:700;letter-spacing:0.077px;">Full Charter</div>
<svg style="left:1582px;top:652.5px" width="12" height="15.0" viewBox="0 0 12 15.0"><path d="M1.2 1.5 L6.0 6.3 L10.8 1.5 M1.2 8.25 L6.0 13.5 L10.8 8.25" fill="none" stroke="#444" stroke-width="2.6"/></svg>
<div style="left:1186.00px;top:691.00px;width:417.00px;height:36.00px;border:1px solid #e2e2e2;background:#fff"></div>
<div style="left:950.70px;top:734.50px;width:658.30px;height:47.00px;border:1.5px solid #c4c4c4;border-radius:6px;background:#fff"></div>
<svg style="left:1228px;top:748px" width="28" height="22" viewBox="0 0 28 22"><defs><linearGradient id="gc" x1="0" y1="0" x2="0" y2="1"><stop offset="0" stop-color="#7dcb6c"/><stop offset="1" stop-color="#3b9f3f"/></linearGradient></defs><path d="M2.5 10 L10.5 17.5 L24.5 3.5" fill="none" stroke="url(#gc)" stroke-width="4.4"/></svg>
<div class="t" style="left:1264.00px;top:748.30px;font-size:20px;line-height:20px;font-weight:700;letter-spacing:-0.103px;">Submit</div>
<svg style="left:1594px;top:768px" width="20" height="21" viewBox="0 0 20 21"><path d="M18 2 L2 19 M18 7.5 L7 19 M18 13 L12 19" stroke="#666" stroke-width="1.4" stroke-dasharray="2 1"/></svg>
<div style="left:1186.50px;top:335.50px;width:416.50px;height:185.50px;background:#fff;border:1px solid #2c6eab;border-top:none;box-shadow:0 4px 10px rgba(0,0,0,0.25)"></div>
<div style="left:1186.50px;top:335.50px;width:416.50px;height:36.50px;background:#b6caeb"></div>
<div class="t" style="left:1193.30px;top:380.00px;font-size:20px;line-height:20px;color:#1a1a1a;letter-spacing:-0.014px;">Better Price</div>
<div class="t" style="left:1193.30px;top:416.20px;font-size:20px;line-height:20px;color:#1a1a1a;letter-spacing:0.289px;">Better Product/Solution</div>
<div class="t" style="left:1193.30px;top:452.70px;font-size:20px;line-height:20px;color:#1a1a1a;letter-spacing:0.085px;">Better Relationship</div>
<div class="t" style="left:1194.30px;top:489.50px;font-size:20px;line-height:20px;color:#1a1a1a;">Won Other</div></body></html>
